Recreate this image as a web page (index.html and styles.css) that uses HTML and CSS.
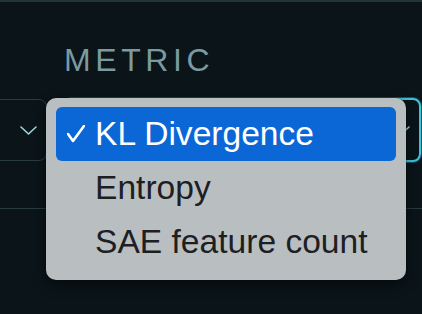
FILE: index.html
```html
<!DOCTYPE html>
<html lang="en">
<head>
    <meta charset="UTF-8">
    <meta name="viewport" content="width=device-width, initial-scale=1.0">
    <title>Metric</title>
    <link rel="stylesheet" href="styles.css">
</head>
<body>
    <!-- toolbar -->
    <div class="toolbar">
        <div class="field field-prev">
            <div class="select">
                <svg class="chevron" width="17" height="9" viewBox="0 0 17 9"><polyline points="1,1 8.5,8 16,1"/></svg>
            </div>
        </div>

        <div class="field field-metric">
            <label class="label">METRIC</label>
            <div class="select focused">
                <svg class="chevron" width="17" height="9" viewBox="0 0 17 9"><polyline points="1,1 8.5,8 16,1"/></svg>
            </div>
        </div>
    </div>

    <!-- open dropdown -->
    <ul class="menu">
        <li class="item active">
            <span class="mark">
                <svg width="18" height="18" viewBox="0 0 18 18"><polyline points="1,9 6,16 17,1"/></svg>
            </span>
            KL Divergence
        </li>
        <li class="item"><span class="mark"></span>Entropy</li>
        <li class="item"><span class="mark"></span>SAE feature count</li>
    </ul>
</body>
</html>
```

FILE: styles.css
```css
* {
    margin: 0;
    padding: 0;
    box-sizing: border-box;
}

body {
    font-family: "Liberation Sans", Arial, sans-serif;
    background: #0a1419;
    width: 422px;
    height: 314px;
    overflow: hidden;
    position: relative;
}

.toolbar {
    display: flex;
    align-items: flex-end;
    gap: 16px;
    border-top: 2px solid #22363a;
    border-bottom: 1px solid #283a40;
    padding: 42px 0 46px 0;
}

.field {
    display: flex;
    flex-direction: column;
}

.field-prev {
    width: 47px;
    margin-left: -100px;
    flex: 0 0 147px;
}

.field-metric {
    flex: 1;
    margin-right: 1px;
}

.label {
    font-size: 32px;
    line-height: 32px;
    letter-spacing: 4.6px;
    color: #7b9aa1;
    padding-left: 1px;
    margin-bottom: 22px;
}

.select {
    height: 62px;
    margin-bottom: 1px;
    border: 1px solid #293b41;
    border-radius: 8px;
    display: flex;
    align-items: center;
    justify-content: flex-end;
    padding-right: 9px;
}

.select.focused {
    height: 64px;
    margin-bottom: 0;
    border: 2px solid #3fc5dd;
    box-shadow: 0 0 0 1px rgba(63, 197, 221, 0.35);
}

.chevron polyline {
    fill: none;
    stroke: #9fd6de;
    stroke-width: 1.6;
    stroke-linecap: round;
    stroke-linejoin: round;
}

/* dropdown */
.menu {
    position: absolute;
    left: 46px;
    top: 98px;
    width: 360px;
    list-style: none;
    background: #b9bfc1;
    border-radius: 10px;
    padding: 9px 10px 11px 10px;
    box-shadow: 0 4px 14px rgba(0, 0, 0, 0.45), 0 0 0 0.5px rgba(0, 0, 0, 0.3);
}

.item {
    display: flex;
    align-items: center;
    height: 54px;
    padding-left: 11px;
    font-size: 33.6px;
    color: #1d2023;
    border-radius: 6px;
    white-space: nowrap;
}

.item.active {
    background: #0b66d6;
    color: #fff;
}

.mark {
    width: 28px;
    flex: 0 0 28px;
    display: flex;
    align-items: center;
}

.mark polyline {
    fill: none;
    stroke: #fff;
    stroke-width: 2.6;
    stroke-linecap: round;
    stroke-linejoin: round;
}
```
